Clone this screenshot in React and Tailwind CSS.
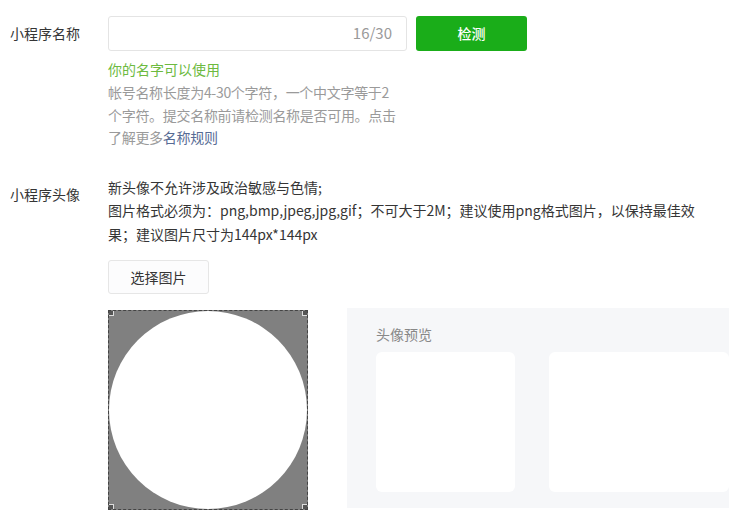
import React from 'react';

const font = { fontFamily: '"Noto Sans CJK SC", "Noto Sans", sans-serif' };

const Handle = ({ pos }) => (
  <span className={`absolute w-[6px] h-[6px] bg-[#555] border border-[#ddd] ${pos}`} />
);

const App = () => {
  return (
    <div className="w-[729px] h-[515px] overflow-hidden bg-white text-[14px] text-[#353535]" style={font}>
      {/* name row */}
      <div className="flex pt-[16px]">
        <div className="w-[108px] shrink-0 pl-[10px] leading-[35px] text-[#353535]">小程序名称</div>
        <div>
          <div className="flex gap-[9px]">
            <div className="w-[299px] h-[35px] border border-[#e4e4e4] rounded-[3px] flex items-center justify-end pr-[14px] text-[15px] text-[#9a9a9a]">
              16/30
            </div>
            <button className="w-[111px] h-[35px] rounded-[3px] bg-[#1aad19] text-white text-[14px] font-medium">检测</button>
          </div>
          <div className="mt-[7px] leading-[22px] text-[#6dba3f]">你的名字可以使用</div>
          <p className="mt-[1px] leading-[22.5px] text-[#9a9a9a] whitespace-nowrap tracking-[-0.3px]">
            帐号名称长度为4-30个字符，一个中文字等于2<br />
            个字符。提交名称前请检测名称是否可用。点击<br />
            了解更多<span className="text-[#576b95]">名称规则</span>
          </p>
        </div>
      </div>

      {/* avatar row */}
      <div className="flex mt-[27px]">
        <div className="w-[108px] shrink-0 pl-[10px] pt-[7px] leading-[22px]">小程序头像</div>
        <div className="flex-1">
          <p className="leading-[23.5px] text-[#353535] whitespace-nowrap">
            新头像不允许涉及政治敏感与色情;<br />
            图片格式必须为：png,bmp,jpeg,jpg,gif；不可大于2M；建议使用png格式图片，以保持最佳效<br />
            果；建议图片尺寸为144px*144px
          </p>
          <button className="mt-[14px] w-[101px] h-[34px] border border-[#e6e6e6] rounded-[3px] bg-[#fcfcfd] text-[#353535]">选择图片</button>
          <div className="flex mt-[14px] gap-[39px]">
            <div className="relative shrink-0 w-[200px] h-[200px] mt-[2px] bg-[#808080] border border-dashed border-[#444] overflow-hidden">
              <div className="absolute inset-0 rounded-full bg-white" />
              <Handle pos="-top-px -left-px" />
              <Handle pos="-top-px -right-px" />
              <Handle pos="-bottom-px -left-px" />
              <Handle pos="-bottom-px -right-px" />
            </div>
            <div className="shrink-0 w-[400px] h-[200px] bg-[#f6f7f9] pl-[29px] pt-[16px]">
              <div className="leading-[20px] text-[#888]">头像预览</div>
              <div className="flex gap-[34px] mt-[8px]">
                <div className="w-[139px] h-[140px] rounded-[6px] bg-white" />
                <div className="w-[180px] h-[140px] rounded-[6px] bg-white" />
              </div>
            </div>
          </div>
        </div>
      </div>
    </div>
  );
};

export default App;
